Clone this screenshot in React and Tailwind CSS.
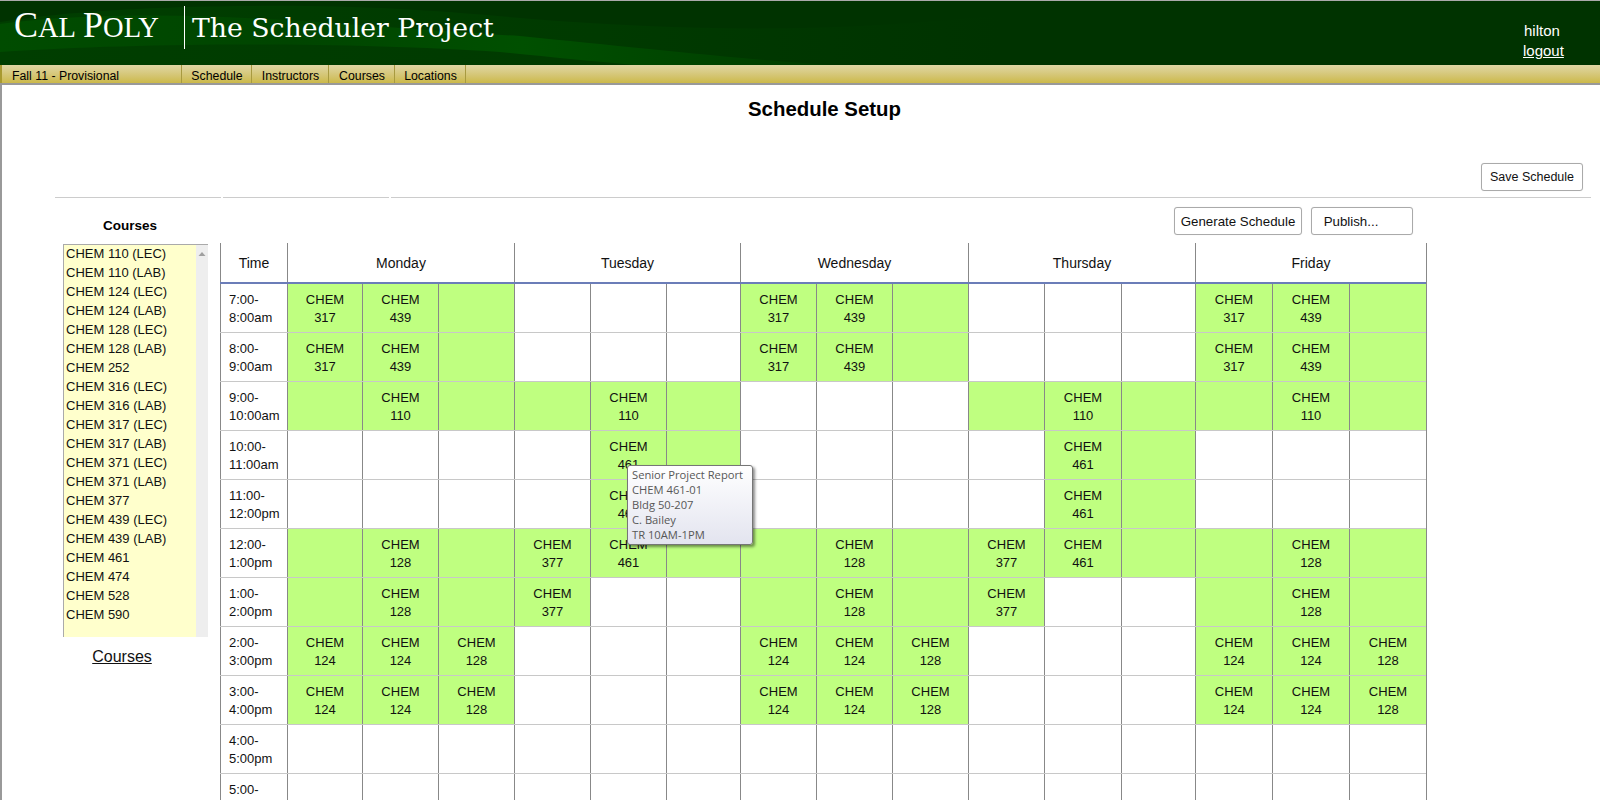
import React from 'react'

const courses = [
  'CHEM 110 (LEC)', 'CHEM 110 (LAB)', 'CHEM 124 (LEC)', 'CHEM 124 (LAB)', 'CHEM 128 (LEC)',
  'CHEM 128 (LAB)', 'CHEM 252', 'CHEM 316 (LEC)', 'CHEM 316 (LAB)', 'CHEM 317 (LEC)',
  'CHEM 317 (LAB)', 'CHEM 371 (LEC)', 'CHEM 371 (LAB)', 'CHEM 377', 'CHEM 439 (LEC)',
  'CHEM 439 (LAB)', 'CHEM 461', 'CHEM 474', 'CHEM 528', 'CHEM 590',
]

const navItems = [
  { label: 'Schedule', width: 'w-[70px]' },
  { label: 'Instructors', width: 'w-[77px]' },
  { label: 'Courses', width: 'w-[66px]' },
  { label: 'Locations', width: 'w-[71px]' },
]

const days = ['Monday', 'Tuesday', 'Wednesday', 'Thursday', 'Friday']

// null = free slot, '' = booked but unlabelled, number = course
const none = [null, null, null]
const rows = [
  { time: ['7:00-', '8:00am'], slots: [[317, 439, ''], none, [317, 439, ''], none, [317, 439, '']] },
  { time: ['8:00-', '9:00am'], slots: [[317, 439, ''], none, [317, 439, ''], none, [317, 439, '']] },
  { time: ['9:00-', '10:00am'], slots: [['', 110, ''], ['', 110, ''], none, ['', 110, ''], ['', 110, '']] },
  { time: ['10:00-', '11:00am'], slots: [none, [null, 461, ''], none, [null, 461, ''], none] },
  { time: ['11:00-', '12:00pm'], slots: [none, [null, 461, ''], none, [null, 461, ''], none] },
  { time: ['12:00-', '1:00pm'], slots: [['', 128, ''], [377, 461, ''], ['', 128, ''], [377, 461, ''], ['', 128, '']] },
  { time: ['1:00-', '2:00pm'], slots: [['', 128, ''], [377, null, null], ['', 128, ''], [377, null, null], ['', 128, '']] },
  { time: ['2:00-', '3:00pm'], slots: [[124, 124, 128], none, [124, 124, 128], none, [124, 124, 128]] },
  { time: ['3:00-', '4:00pm'], slots: [[124, 124, 128], none, [124, 124, 128], none, [124, 124, 128]] },
  { time: ['4:00-', '5:00pm'], slots: [none, none, none, none, none] },
  { time: ['5:00-', '6:00pm'], slots: [none, none, none, none, none] },
]

const gridCols = 'grid-cols-[67px_75px_76px_76px_76px_76px_74px_76px_76px_76px_76px_77px_74px_77px_77px_77px]'

function Button({ className, children }) {
  return (
    <button
      type="button"
      className={`h-[28px] rounded-[3px] border border-[#aaaaaa] bg-white text-[#111] shadow-[0_0_1px_rgba(0,0,0,0.15)] ${className}`}
    >
      {children}
    </button>
  )
}

function Header() {
  return (
    <div className="relative flex h-[65px] shrink-0 border-t border-[#aaaaaa] bg-[#003300]">
      <svg className="absolute inset-0 h-full w-full" viewBox="0 0 1600 64" preserveAspectRatio="none">
        <defs>
          <linearGradient id="midBand" x1="0" x2="1000" y1="0" y2="0" gradientUnits="userSpaceOnUse">
            <stop offset="0" stopColor="#003e00" />
            <stop offset="0.6" stopColor="#003a00" />
            <stop offset="1" stopColor="#003300" />
          </linearGradient>
          <linearGradient id="brightBand" x1="0" x2="830" y1="0" y2="0" gradientUnits="userSpaceOnUse">
            <stop offset="0" stopColor="#004c00" />
            <stop offset="0.35" stopColor="#004500" />
            <stop offset="0.63" stopColor="#005000" />
            <stop offset="1" stopColor="#003c00" />
          </linearGradient>
        </defs>
        <path d="M0 21 C60 12 130 6 250 5 C350 4 430 9 520 17 C640 27 760 30 860 25 C920 22 960 18 1000 14 L1000 64 L0 64 Z" fill="url(#midBand)" />
        <path d="M0 23 C100 10 220 14 330 22 C420 28 480 33 520 35 C640 47 740 58 830 64 L634 64 C590 60 550 56 500 51 C350 41 150 41 0 51 Z" fill="url(#brightBand)" />
      </svg>
      <div className="relative flex w-full items-start">
        <div className="ml-[14px] mt-[5px] flex w-[170px] items-baseline font-['Liberation_Serif',serif] text-[36px] leading-[38px] text-white">
          C<span className="text-[28.5px]">AL</span>
          <span className="ml-[7px]">P</span>
          <span className="text-[28.5px]">OLY</span>
        </div>
        <div className="mt-[5px] h-[43px] w-px bg-white" />
        <div className="ml-[7px] mt-[9px] font-['DejaVu_Serif',serif] text-[26.7px] leading-[36px] text-white">
          The Scheduler Project
        </div>
        <div className="ml-auto mr-[35px] mt-[20px] flex w-[42px] flex-col font-['Liberation_Sans',sans-serif] text-[15px] leading-[20px] text-white">
          <span className="pl-[1px]">hilton</span>
          <a className="underline">logout</a>
        </div>
      </div>
    </div>
  )
}

function Nav() {
  return (
    <div className="flex h-[20px] shrink-0 border-b-2 border-[#999999] bg-gradient-to-b from-[#e0d6a4] to-[#ccb948] font-['Liberation_Sans',sans-serif] text-[12.3px] text-black">
      <div className="w-[2px] bg-[#a89a30]" />
      <div className="flex w-[180px] items-center border-r border-[#a89a40] pl-[10px] pt-[4px]">Fall 11 - Provisional</div>
      {navItems.map((item) => (
        <div key={item.label} className={`flex items-center justify-center border-r border-[#a89a40] pl-[1px] pt-[4px] ${item.width}`}>
          {item.label}
        </div>
      ))}
    </div>
  )
}

function CourseList() {
  return (
    <div className="flex w-[145px] shrink-0 flex-col">
      <div className="mt-[18px] flex h-[28px] w-[134px] items-start justify-center text-[13.5px] font-bold leading-[20px] text-black">
        Courses
      </div>
      <div className="flex h-[393px] border-l border-t border-[#aaaaaa]">
        <div className="flex-1 bg-[#ffffcc] pl-[2px] text-[13px] leading-[19px] text-[#111]">
          {courses.map((course) => (
            <div key={course} className="-translate-y-px">{course}</div>
          ))}
        </div>
        <div className="w-[12px] bg-[#eeeeee] pt-[6px]">
          <svg width="12" height="6" viewBox="0 0 12 6" className="block">
            <path d="M2.5 5 L6 1 L9.5 5 Z" fill="#a0a0a0" />
          </svg>
        </div>
      </div>
      <a className="mt-[10px] w-[118px] text-center text-[16px] leading-[20px] text-[#111] underline">Courses</a>
    </div>
  )
}

function ScheduleTable() {
  return (
    <div className="relative border-r border-[#888888] w-fit">
      <div className={`grid ${gridCols} border-b-2 border-[#6b7db8] text-[14px] text-[#111]`}>
        <div className="flex h-[39px] items-center justify-center border-l border-[#888888] pt-[2px]">Time</div>
        {days.map((day) => (
          <div key={day} className="col-span-3 flex h-[39px] items-center justify-center border-l border-[#888888] pt-[2px]">
            {day}
          </div>
        ))}
      </div>
      {rows.map((row) => (
        <div key={row.time[0]} className={`grid ${gridCols} h-[49px] border-b border-[#c8c8c8] text-[13px] leading-[18px] text-[#111]`}>
          <div className="flex flex-col justify-center border-l border-[#888888] pl-[8px] pt-[2px]">
            <span>{row.time[0]}</span>
            <span>{row.time[1]}</span>
          </div>
          {row.slots.flat().map((slot, i) => (
            <div
              key={i}
              className={`flex flex-col items-center justify-center border-l border-[#888888] pt-[2px] ${slot === null ? 'bg-white' : 'bg-[#bfff80]'}`}
            >
              {slot ? (
                <>
                  <span>CHEM</span>
                  <span>{slot}</span>
                </>
              ) : null}
            </div>
          ))}
        </div>
      ))}
      <div className="absolute left-[407px] top-[222px] h-[80px] w-[126px] rounded-[3px] border border-[#767676] bg-gradient-to-b from-white to-[#e3e4ef] pl-[4px] pt-[1px] font-['Open_Sans',sans-serif] text-[11.2px] leading-[15px] text-[#575757] shadow-[2px_2px_3px_rgba(0,0,0,0.45)]">
        <div>Senior Project Report</div>
        <div>CHEM 461-01</div>
        <div>Bldg 50-207</div>
        <div>C. Bailey</div>
        <div>TR 10AM-1PM</div>
      </div>
    </div>
  )
}

export default function App() {
  return (
    <div className="flex h-screen flex-col overflow-hidden bg-white font-['Liberation_Sans',sans-serif]">
      <Header />
      <Nav />
      <div className="flex min-h-0 flex-1 flex-col border-l-2 border-[#999999]">
        <div className="h-[78px] shrink-0 pl-[746px] pt-[12px] text-[20.4px] font-bold leading-[25px] text-black">Schedule Setup</div>
        <div className="flex shrink-0 justify-end pr-[17px]">
          <Button className="w-[102px] text-[12.5px]">Save Schedule</Button>
        </div>
        <div className="ml-[53px] mr-[9px] mt-[6px] flex shrink-0 gap-[2px]">
          <div className="h-px w-[166px] bg-[#cccccc]" />
          <div className="h-px w-[166px] bg-[#cccccc]" />
          <div className="h-px flex-1 bg-[#cccccc]" />
        </div>
        <div className="ml-[61px] flex shrink-0 gap-[12px]">
          <CourseList />
          <div className="flex flex-col">
            <div className="mb-[8px] mt-[9px] flex gap-[9px] pl-[954px]">
              <Button className="w-[128px] pt-[1px] text-[13.3px]">Generate Schedule</Button>
              <Button className="w-[102px] pr-[22px] pt-[1px] text-[13.3px]">Publish...</Button>
            </div>
            <ScheduleTable />
          </div>
        </div>
      </div>
    </div>
  )
}
